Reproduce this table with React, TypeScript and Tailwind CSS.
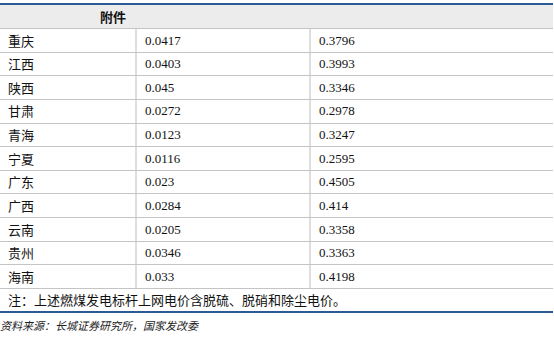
const rows: [string, string, string][] = [
  ["重庆", "0.0417", "0.3796"],
  ["江西", "0.0403", "0.3993"],
  ["陕西", "0.045", "0.3346"],
  ["甘肃", "0.0272", "0.2978"],
  ["青海", "0.0123", "0.3247"],
  ["宁夏", "0.0116", "0.2595"],
  ["广东", "0.023", "0.4505"],
  ["广西", "0.0284", "0.414"],
  ["云南", "0.0205", "0.3358"],
  ["贵州", "0.0346", "0.3363"],
  ["海南", "0.033", "0.4198"],
];

const cjk = { fontFamily: '"Noto Sans CJK SC", sans-serif' };
const num = { fontFamily: '"Liberation Serif", serif' };

export default function App() {
  return (
    <div className="w-[554px] h-[342px] bg-white text-[#111]">
      <div className="h-[3px]" />
      <div className="w-[553px] border-t-2 border-[#2b5a94]">
        <div className="h-[24px] bg-[#ececec] border-b border-[#c4c4c4] flex items-center">
          <div className="w-[137px] pl-[100px] text-[13px] font-bold leading-none" style={cjk}>
            附件
          </div>
        </div>
        {rows.map(([a, b, c]) => (
          <div key={a} className="h-[23.64px] border-b border-[#c4c4c4] flex text-[13px]">
            <div className="w-[137px] border-r-2 border-[#dedede] pl-[8px] flex items-center" style={cjk}>
              {a}
            </div>
            <div className="w-[174px] border-r-2 border-[#dedede] pl-[8px] flex items-center" style={num}>
              {b}
            </div>
            <div className="flex-1 pl-[8px] flex items-center" style={num}>
              {c}
            </div>
          </div>
        ))}
        <div className="h-[22px] flex items-center pl-[8px] text-[13px]" style={cjk}>
          注：上述燃煤发电标杆上网电价含脱硫、脱硝和除尘电价。
        </div>
        <div className="h-[2px] bg-[#2b5a94]" />
      </div>
      <div className="h-[24px] flex items-center text-[11px] italic text-[#222]" style={cjk}>
        资料来源：长城证券研究所，国家发改委
      </div>
    </div>
  );
}
